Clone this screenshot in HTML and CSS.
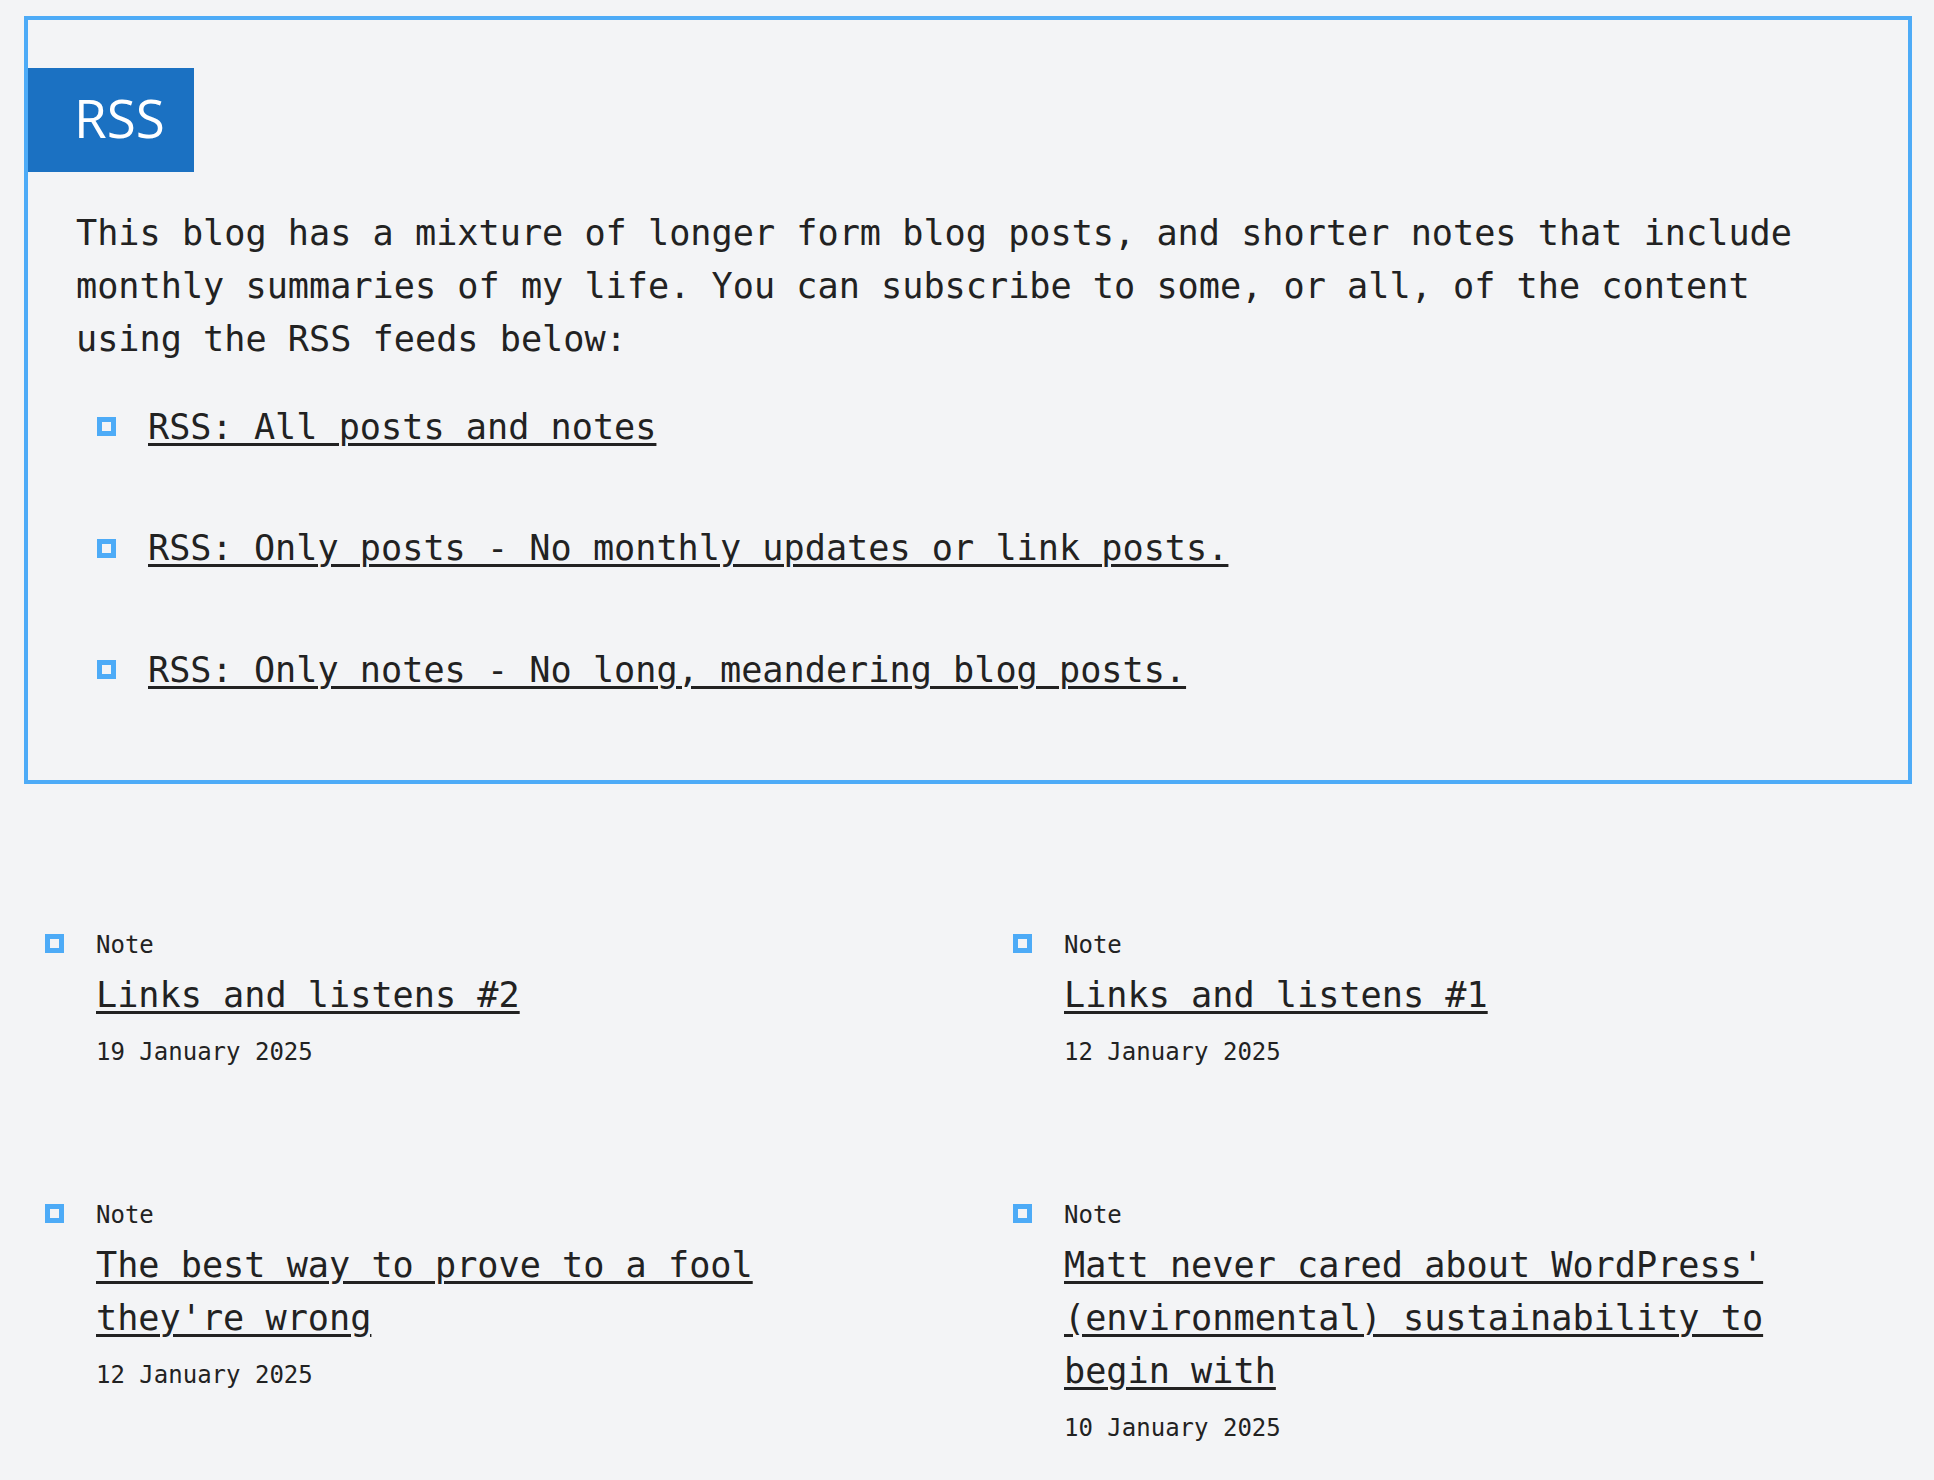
FILE: index.html
```html
<!DOCTYPE html>
<html lang="en">
<head>
<meta charset="utf-8">
<title>RSS</title>
<link rel="stylesheet" href="styles.css">
</head>
<body>
<section class="rss-box">
  <h2 class="rss-title">RSS</h2>
  <p class="intro">This blog has a mixture of longer form blog posts, and shorter notes that include monthly summaries of my life. You can subscribe to some, or all, of the content using the RSS feeds below:</p>
  <ul class="feed-list">
    <li class="feed-item"><span class="marker"></span><a class="feed-link" href="#">RSS: All posts and notes</a></li>
    <li class="feed-item"><span class="marker"></span><a class="feed-link" href="#">RSS: Only posts - No monthly updates or link posts.</a></li>
    <li class="feed-item"><span class="marker"></span><a class="feed-link" href="#">RSS: Only notes - No long, meandering blog posts.</a></li>
  </ul>
</section>

<ul class="notes">
  <li class="note">
    <span class="marker note-marker"></span>
    <div class="note-body">
      <div class="note-type">Note</div>
      <a class="note-title" href="#">Links and listens #2</a>
      <div class="note-date">19 January 2025</div>
    </div>
  </li>
  <li class="note">
    <span class="marker note-marker"></span>
    <div class="note-body">
      <div class="note-type">Note</div>
      <a class="note-title" href="#">Links and listens #1</a>
      <div class="note-date">12 January 2025</div>
    </div>
  </li>
  <li class="note">
    <span class="marker note-marker"></span>
    <div class="note-body">
      <div class="note-type">Note</div>
      <a class="note-title" href="#">The best way to prove to a fool they're wrong</a>
      <div class="note-date">12 January 2025</div>
    </div>
  </li>
  <li class="note">
    <span class="marker note-marker"></span>
    <div class="note-body">
      <div class="note-type">Note</div>
      <a class="note-title" href="#">Matt never cared about WordPress' (environmental) sustainability to begin with</a>
      <div class="note-date">10 January 2025</div>
    </div>
  </li>
</ul>
</body>
</html>
```
FILE: styles.css
```css
html {
  background: #f3f4f6;
}

body {
  margin: 0;
  padding: 16px 22px 0 24px;
  background: #f3f4f6;
  color: #222222;
  font-family: "DejaVu Sans Mono", "Liberation Mono", monospace;
  font-size: 35.2px;
  line-height: 52.8px;
}

.rss-box {
  border: 4px solid #4dabf7;
  padding: 48px 48px 48px 48px;
}

.rss-title {
  display: table;
  margin: 0 0 35px -48px;
  padding: 0 29px 0 46px;
  height: 104px;
  background: #1b71c2;
  color: #ffffff;
  font-family: "Open Sans", "Noto Sans", sans-serif;
  font-weight: 500;
  font-size: 53px;
  line-height: 100px;
}

.intro {
  margin: 0 0 35.2px;
}

.feed-list {
  list-style: none;
  margin: 0 0 35.2px;
  padding: 0;
  display: flex;
  flex-direction: column;
  gap: 68.7px;
}

.feed-item {
  display: flex;
  align-items: center;
  padding-left: 21px;
}

.marker {
  flex: none;
  box-sizing: border-box;
  width: 19px;
  height: 19px;
  border: 5px solid #4dabf7;
  margin-right: 32px;
  background: transparent;
}

.feed-link,
.note-title {
  color: #222222;
  text-decoration: underline;
  text-decoration-thickness: 3px;
  text-underline-offset: 4px;
}

.notes {
  list-style: none;
  margin: 143px 0 0;
  padding: 0;
  display: grid;
  grid-template-columns: 1fr 1fr;
  column-gap: 48px;
  row-gap: 127px;
}

.note {
  display: flex;
  align-items: flex-start;
  padding-left: 21px;
}

.note-marker {
  margin-top: 7px;
}

.note-body {
  max-width: 780px;
}

.note-type {
  font-size: 24px;
  line-height: 36px;
}

.note-title {
  display: block;
  margin-top: 5px;
  font-size: 35.2px;
  line-height: 53px;
}

.note-date {
  margin-top: 13px;
  font-size: 24px;
  line-height: 36px;
}
```
